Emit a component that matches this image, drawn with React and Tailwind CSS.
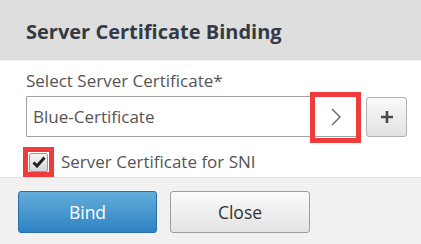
import React from "react";

export default function App() {
  const font = { fontFamily: '"Open Sans", "Noto Sans", Arial, sans-serif' };
  return (
    <div className="w-[421px] h-[244px] overflow-hidden bg-white flex flex-col" style={font}>
      <div className="h-[60px] bg-[#dedede] flex items-center pl-[26px] shrink-0">
        <span className="text-[20px] font-bold text-[#333a44] leading-none pt-[4px]">
          Server Certificate Binding
        </span>
      </div>
      <div className="h-px bg-[#f2f2f2] shrink-0" />
      <div className="h-[116px] shrink-0 flex flex-col pl-[26px] pt-[10px]">
        <div className="text-[17px] leading-[20px] text-[#555]">Select Server Certificate*</div>
        <div className="flex items-center mt-[5px] gap-[9px]">
          <div className="relative w-[331px] h-[41px] border border-[#a3a3a3] bg-white flex items-center rounded-[1px]">
            <span className="pl-[6px] text-[17px] text-[#555] flex-1">Blue-Certificate</span>
            <div className="w-[41px] h-full flex items-center justify-center">
              <svg width="12" height="20" viewBox="0 0 12 20">
                <path d="M2 2 L10 10 L2 18" fill="none" stroke="#666" strokeWidth="1.4" />
              </svg>
            </div>
            <div className="absolute right-[-5px] top-[-5px] w-[51px] h-[51px] border-[5px] border-[#ef3b3b]" />
          </div>
          <div className="w-[41px] h-[40px] rounded-[3px] border border-[#b0b0b0] bg-gradient-to-b from-[#fafafa] to-[#e2e2e2] flex items-center justify-center">
            <svg width="14" height="14" viewBox="0 0 14 14">
              <path d="M7 1 V13 M1 7 H13" stroke="#4a4a4a" strokeWidth="2.6" />
            </svg>
          </div>
        </div>
        <div className="flex items-center mt-[10px]">
          <div className="relative w-[31px] h-[30px] -ml-[3px] flex items-center justify-center">
            <div className="w-[19px] h-[19px] rounded-[2px] border border-[#9a9a9a] bg-gradient-to-b from-[#f4f4f4] to-[#d8d8d8] flex items-center justify-center">
              <svg width="14" height="12" viewBox="0 0 14 12">
                <path d="M1.5 6.5 L5 10 L12.5 1.5" fill="none" stroke="#222" strokeWidth="3" />
              </svg>
            </div>
            <div className="absolute inset-0 border-[5px] border-[#ef3b3b]" />
          </div>
          <span className="ml-[7px] text-[17px] text-[#555]">Server Certificate for SNI</span>
        </div>
      </div>
      <div className="h-px bg-[#e2e2e2] shrink-0" />
      <div className="flex-1 bg-[#f1f1f1] flex items-start pt-[13px] pl-[18px] gap-[13px]">
        <button className="w-[139px] h-[42px] rounded-[3px] border border-[#2c6ea8] bg-gradient-to-b from-[#62acdb] to-[#2e84c3] text-white text-[17.5px]">
          Bind
        </button>
        <button className="w-[140px] h-[42px] rounded-[3px] border border-[#9c9c9c] bg-gradient-to-b from-[#fbfbfb] to-[#e3e3e3] text-[#333] text-[17.5px]">
          Close
        </button>
      </div>
    </div>
  );
}
